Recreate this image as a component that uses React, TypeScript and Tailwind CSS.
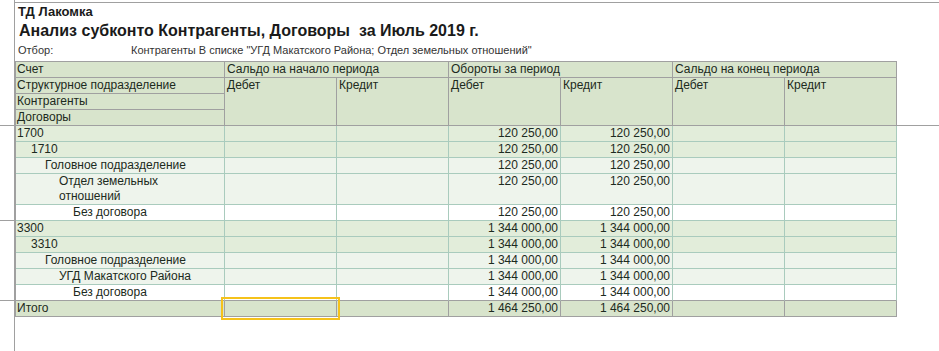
import React from "react";

type Row = {
  label: React.ReactNode;
  level: number;
  tone: "l1" | "l2" | "white";
  debit: string;
  credit: string;
  tall?: boolean;
};

const rows: Row[] = [
  { label: "1700", level: 0, tone: "l1", debit: "120 250,00", credit: "120 250,00" },
  { label: "1710", level: 1, tone: "l1", debit: "120 250,00", credit: "120 250,00" },
  { label: "Головное подразделение", level: 2, tone: "l2", debit: "120 250,00", credit: "120 250,00" },
  {
    label: (
      <>
        Отдел земельных
        <br />
        отношений
      </>
    ),
    level: 3,
    tone: "l2",
    debit: "120 250,00",
    credit: "120 250,00",
    tall: true,
  },
  { label: "Без договора", level: 4, tone: "white", debit: "120 250,00", credit: "120 250,00" },
  { label: "3300", level: 0, tone: "l1", debit: "1 344 000,00", credit: "1 344 000,00" },
  { label: "3310", level: 1, tone: "l1", debit: "1 344 000,00", credit: "1 344 000,00" },
  { label: "Головное подразделение", level: 2, tone: "l2", debit: "1 344 000,00", credit: "1 344 000,00" },
  { label: "УГД Макатского Района", level: 3, tone: "l2", debit: "1 344 000,00", credit: "1 344 000,00" },
  { label: "Без договора", level: 4, tone: "white", debit: "1 344 000,00", credit: "1 344 000,00" },
];

const indent = ["pl-[1px]", "pl-[15px]", "pl-[29px]", "pl-[43px]", "pl-[57px]"];
const toneBg = { l1: "bg-[#e2edda]", l2: "bg-[#eef4ec]", white: "bg-white" };

const head = "bg-[#d8e4cc] border-r border-b border-[#a0a0a0] h-[16px] leading-[15px] whitespace-nowrap";

export default function App() {
  return (
    <div
      className="relative w-[939px] h-[351px] overflow-hidden bg-white text-[#1c2a20]"
      style={{ fontFamily: '"Liberation Sans", Arial, sans-serif' }}
    >
      {/* gutter marks */}
      <div className="absolute left-0 top-[125px] w-[14px] h-px bg-[#a0a0a0]" />
      <div className="absolute left-0 top-[220px] w-[14px] h-px bg-[#a0a0a0]" />
      <div className="absolute left-0 top-[300px] w-[14px] h-px bg-[#a0a0a0]" />
      <div className="absolute left-[897px] top-[125px] w-[42px] h-px bg-[#a0a0a0]" />

      <div className="ml-[14px] h-full border-l border-[#a0a0a0] pt-[2px]">
        <div className="border-t border-[#a0a0a0]">
          <div className="h-[18px] pl-[3px] text-[13px] font-bold leading-[18px] text-[#1a1a1a]">ТД Лакомка</div>
          <div className="h-[20px] pl-[4px] text-[16px] font-bold leading-[20px] whitespace-pre text-[#1a1a1a]">
            Анализ субконто Контрагенты, Договоры  за Июль 2019 г.
          </div>
          <div className="flex h-[18px] pl-[3px] text-[11px] leading-[18px] text-[#333]">
            <span className="w-[113px]">Отбор:</span>
            <span>Контрагенты В списке "УГД Макатского Района; Отдел земельных отношений"</span>
          </div>
        </div>

        <div className="mt-[2px] grid w-max grid-cols-[209px_repeat(6,112px)] border-l border-t border-[#a0a0a0] text-[12px]">
          {/* header */}
          <div className={`${head} pl-[1px]`}>Счет</div>
          <div className={`${head} col-span-2 pl-[2px]`}>Сальдо на начало периода</div>
          <div className={`${head} col-span-2 pl-[2px]`}>Обороты за период</div>
          <div className={`${head} col-span-2 pl-[2px]`}>Сальдо на конец периода</div>

          <div className={`${head} pl-[1px]`}>Структурное подразделение</div>
          {["Дебет", "Кредит", "Дебет", "Кредит", "Дебет", "Кредит"].map((t, i) => (
            <div key={i} className={`${head} row-span-3 h-auto pl-[2px]`}>
              {t}
            </div>
          ))}
          <div className={`${head} pl-[1px]`}>Контрагенты</div>
          <div className={`${head} pl-[1px]`}>Договоры</div>

          {/* body */}
          {rows.map((r, i) => {
            const last = i === rows.length - 1;
            const line = last ? "border-b-[#a0a0a0]" : "border-b-[#a9cbbd]";
            const cell = `${toneBg[r.tone]} border-r border-b border-r-[#a9cbbd] ${line} leading-[15px] ${r.tall ? "h-[31px]" : "h-[16px]"}`;
            return (
              <React.Fragment key={i}>
                <div className={`${cell} ${indent[r.level]} whitespace-nowrap`}>{r.label}</div>
                <div className={cell} />
                <div className={cell} />
                <div className={`${cell} pr-[2px] text-right`}>{r.debit}</div>
                <div className={`${cell} pr-[2px] text-right`}>{r.credit}</div>
                <div className={cell} />
                <div className={cell} />
              </React.Fragment>
            );
          })}

          {/* total */}
          <div className={`${head} pl-[1px]`}>Итого</div>
          <div className={`${head} relative bg-[#d0dcc6]`}>
            <div className="absolute -left-[4px] -right-[4px] -top-[4px] -bottom-[4px] border-2 border-[#f5c21b]" />
          </div>
          <div className={head} />
          <div className={`${head} pr-[2px] text-right`}>1 464 250,00</div>
          <div className={`${head} pr-[2px] text-right`}>1 464 250,00</div>
          <div className={head} />
          <div className={head} />
        </div>
      </div>
    </div>
  );
}
